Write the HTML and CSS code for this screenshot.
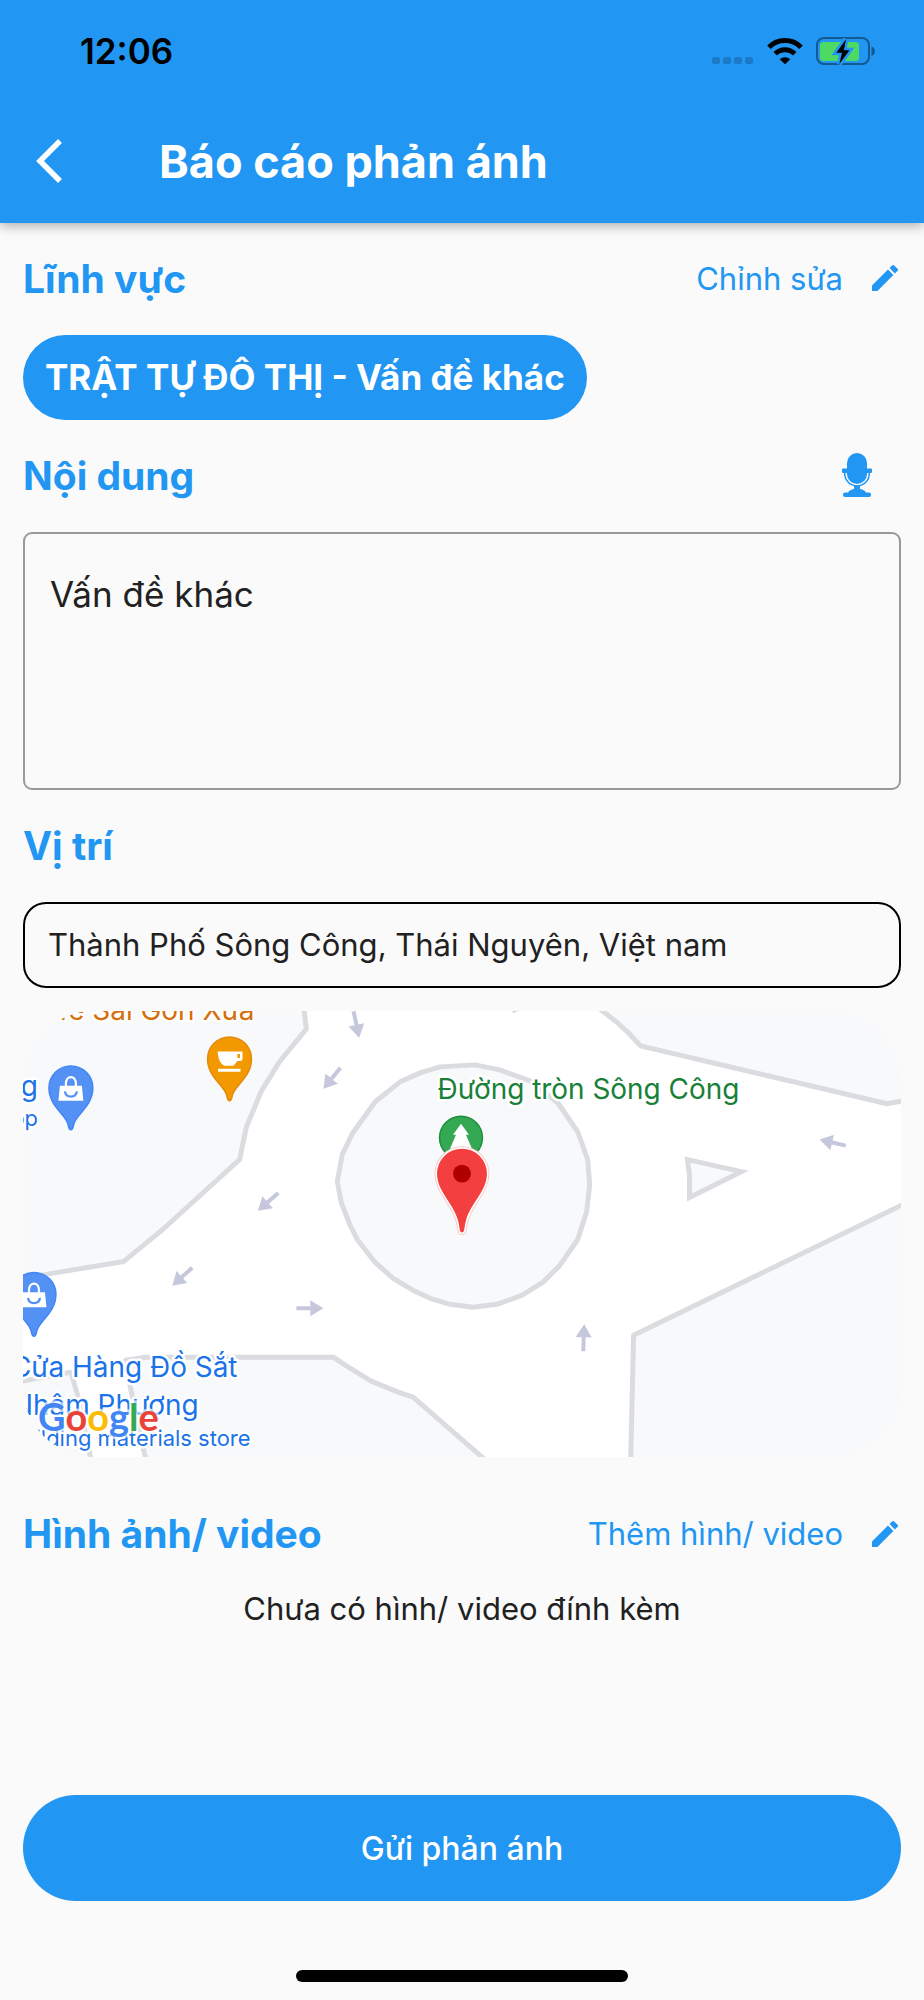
FILE: index.html
```html
<!DOCTYPE html>
<html lang="vi">
<head>
  <meta charset="UTF-8" />
  <meta name="viewport" content="width=device-width, initial-scale=1.0"/>
  <title>Báo cáo phản ánh</title>
  <link rel="stylesheet" href="styles.css">
</head>
<body>

<header class="header">
  <div class="status-bar">
    <span class="time">12:06</span>
    <div class="status-icons">
      <svg class="signal" width="42" height="26" viewBox="0 0 42 26">
        <g fill="#1c79c6">
          <rect x="0" y="19" width="8" height="7" rx="2.5"/>
          <rect x="11" y="19" width="8" height="7" rx="2.5"/>
          <rect x="22" y="19" width="8" height="7" rx="2.5"/>
          <rect x="33" y="19" width="8" height="7" rx="2.5"/>
        </g>
      </svg>
      <svg class="wifi" width="36" height="26" viewBox="0 0 36 26">
        <path d="M2 9.2A22.5 22.5 0 0 1 34 9.2" fill="none" stroke="#000" stroke-width="5"/>
        <path d="M8.3 15.8A13.8 13.8 0 0 1 27.7 15.8" fill="none" stroke="#000" stroke-width="5"/>
        <path d="M12.8 21.2A7.6 7.6 0 0 1 23.2 21.2L18 26.3z"/>
      </svg>
      <svg class="battery" width="60" height="28" viewBox="0 0 60 28">
        <rect x="1" y="1" width="52" height="26" rx="7" fill="none" stroke="#14598f" stroke-width="2"/>
        <path d="M55.5 9.5c4.500 1.500 4.500 8 0 9.500z" fill="#14598f"/>
        <rect x="4" y="5" width="39" height="19" rx="3.500" fill="#4cd964"/>
        <path d="M30 2.300L20.300 15.700H26L23.300 27L33.500 13.200H28z" stroke="#2196f3" stroke-width="5" paint-order="stroke"/>
      </svg>
    </div>
  </div>
  <div class="app-bar">
    <button type="button" class="back" aria-label="Quay lại">
      <svg width="27" height="44" viewBox="0 0 27 44"><path d="M24 2L4 22l20 20" fill="none" stroke="#fff" stroke-width="5.500"/></svg>
    </button>
    <h1>Báo cáo phản ánh</h1>
  </div>
</header>

<form class="report">
  <div class="section-head">
    <h2>Lĩnh vực</h2>
    <a href="#field" class="action">
      Chỉnh sửa
      <svg width="26" height="26" viewBox="3 3 18 18"><path d="M3 17.250V21h3.750L17.810 9.940l-3.750-3.750L3 17.250zM20.710 7.040a1 1 0 0 0 0-1.410l-2.340-2.340a1 1 0 0 0-1.410 0l-1.830 1.830 3.750 3.750 1.830-1.830z"/></svg>
    </a>
  </div>

  <div class="chip" id="field">TRẬT TỰ ĐÔ THỊ - Vấn đề khác</div>

  <div class="section-head">
    <h2><label for="content">Nội dung</label></h2>
    <button type="button" class="mic" aria-label="Ghi âm">
      <svg width="30" height="44" viewBox="0 0 30 44">
        <rect x="5" y="0" width="20" height="31" rx="10"/>
        <path d="M1 15.500h4v4.500h-4a1 1 0 0 1-1-1v-2.500a1 1 0 0 1 1-1zM25 15.500h4a1 1 0 0 1 1 1v2.500a1 1 0 0 1-1 1h-4z"/>
        <path d="M2.700 19v1.500a12.300 12.300 0 0 0 24.600 0V19" fill="none" stroke="#2196f3" stroke-width="1.500"/>
        <path d="M12 32.500h6v3.500c3 .5 5 1.500 6 3.500h3a2 2 0 0 1 2 2v.5a2 2 0 0 1-2 2H3a2 2 0 0 1-2-2v-.5a2 2 0 0 1 2-2h3c1-2 3-3 6-3.500z"/>
      </svg>
    </button>
  </div>

  <textarea id="content">Vấn đề khác</textarea>

  <div class="section-head">
    <h2><label for="address">Vị trí</label></h2>
  </div>

  <div class="location">
    <input type="text" id="address" value="Thành Phố Sông Công, Thái Nguyên, Việt nam" />

    <div class="map">
      <svg viewBox="22 1011 880 447">
        <defs>
          <path id="arrow" d="M-13-2H1V-8L14 0 1 8V2H-13z"/>
          <path id="pin" d="M0 42C-2 42-2 40-3 36C-6 26-22 18-22 0A22 22 0 0 1 22 0C22 18 6 26 3 36C2 40 2 42 0 42z"/>
          <path id="marker" d="M462 1233C459 1233 460 1228 458 1221C453 1203 437 1192 437 1174A25 25 0 0 1 487 1174C487 1192 471 1203 466 1221C464 1228 465 1233 462 1233z"/>
          <g id="shop">
            <use href="#pin" fill="#5491f5" stroke="#4285f4" stroke-width="1.500"/>
            <path d="M-11-2H11L12.500 13H-12.500z" fill="#fff"/>
            <path d="M-5-1V-4C-5-13 5-13 5-4V-1" fill="none" stroke="#fff" stroke-width="2.200"/>
            <path d="M-6 3.500C-5 10.500 5 10.500 6 3.500" fill="none" stroke="#5491f5" stroke-width="2.300"/>
          </g>
        </defs>

        <!-- land -->
        <g class="land">
          <path d="M303 1005L306 1029L279 1062L261 1091L246 1127L239 1160L162 1230L123 1262L45 1275L15 1280V1000z"/>
          <path d="M15 1383L70 1373L77 1397L91 1465H15z"/>
          <path d="M146 1465L130 1390L125 1361L145 1358H333L345 1366L371 1382L398 1393L413 1398L490 1465z"/>
          <path d="M595 1005L617 1022L630 1034L641 1046L888 1104L910 1100V1000z"/>
          <path d="M910 1202L634 1336L631 1465H910z"/>
          <path stroke-linejoin="miter" d="M688 1160L690 1175V1198L742 1172z"/>
          <path d="M337 1182L342 1155L352 1134L375 1102L400 1082L420 1073L440 1067L475 1065L500 1070L530 1081L558 1103L578 1132L588 1160L590 1185L587 1212L578 1240L560 1266L543 1283L522 1296L497 1305L473 1308L450 1305L430 1299L415 1292L393 1279L375 1263L357 1240L350 1226L341 1203z"/>
        </g>

        <g fill="#c5c8dc">
          <use href="#arrow" transform="translate(309 1309)"/>
          <use href="#arrow" transform="translate(356 1024) rotate(78)"/>
          <use href="#arrow" transform="translate(332 1078) rotate(129)"/>
          <use href="#arrow" transform="translate(268 1202) rotate(139)"/>
          <use href="#arrow" transform="translate(182 1277) rotate(138)"/>
          <use href="#arrow" transform="translate(834 1143) rotate(193)"/>
          <use href="#arrow" transform="translate(584 1339) rotate(-88)"/>
          <path d="M513 1011h5l-5 2z"/>
        </g>

        <!-- places -->
        <g transform="translate(229 1059)">
          <use href="#pin" fill="#f29900" stroke="#e58a0a" stroke-width="1.500"/>
          <path fill="#fff" d="M-12-7.500H13V.5C13 2 11 2 8 2L4 7H-5C-10 4-11 0-12-7.500zM8-5V-1H10.500V-5zM-11.500 10H11V13H-11.500z"/>
        </g>
        <use href="#shop" transform="translate(70 1088)"/>
        <use href="#shop" transform="translate(33 1295)"/>

        <g class="place blue">
          <text x="37" y="1096">Hùng</text>
          <text x="37" y="1126" class="small">Shop</text>
          <text x="237" y="1378">Cửa Hàng Đồ Sắt</text>
          <text x="198" y="1416">Nhâm Phượng</text>
          <text x="250" y="1447" class="small">Building materials store</text>
        </g>
        <text x="254" y="1020" class="place orange">Cafe Sài Gòn Xưa</text>
        <text x="740" y="1099" class="place green">Đường tròn Sông Công</text>

        <g transform="translate(461 1138)">
          <circle r="21.500" fill="#34a853" stroke="#1e8e3e" stroke-width="1.500"/>
          <path fill="#fff" d="M0-14L8-3H5L11 11H-11L-5-3H-8z"/>
        </g>
        <use href="#marker" fill="#f7c9c9" stroke="#f7c9c9" stroke-width="5"/>
        <use href="#marker" fill="#f33f3f" stroke="#fff" stroke-width="3" paint-order="stroke"/>
        <circle cx="462" cy="1174" r="9" fill="#b00000"/>

        <text x="37" y="1432" class="google"><tspan fill="#4285f4">G</tspan><tspan fill="#ea4335">o</tspan><tspan fill="#fbbc04">o</tspan><tspan fill="#4285f4">g</tspan><tspan fill="#34a853">l</tspan><tspan fill="#ea4335">e</tspan></text>
      </svg>
    </div>
  </div>

  <div class="media">
    <div class="section-head">
      <h2>Hình ảnh/ video</h2>
      <a href="#media" class="action">
        Thêm hình/ video
        <svg width="26" height="26" viewBox="3 3 18 18"><path d="M3 17.250V21h3.750L17.810 9.940l-3.750-3.750L3 17.250zM20.710 7.040a1 1 0 0 0 0-1.410l-2.340-2.340a1 1 0 0 0-1.410 0l-1.830 1.830 3.750 3.750 1.830-1.830z"/></svg>
      </a>
    </div>
    <p id="media">Chưa có hình/ video đính kèm</p>
  </div>

  <button type="submit" class="submit">Gửi phản ánh</button>
</form>

<div class="home-indicator"></div>

</body>
</html>
```
FILE: styles.css
```css
* {
  box-sizing: border-box;
}

body {
  font-family: Inter, "Noto Sans", sans-serif;
  font-size: 31px;
  color: #212121;
  background-color: #fafafa;
  margin: 0;
  min-height: 100vh;
  display: flex;
  flex-direction: column;
}

h1, h2, p {
  margin: 0;
}

svg {
  display: block;
}

button {
  font-family: inherit;
  border: none;
  padding: 0;
  background: none;
  cursor: pointer;
}

.header {
  background-color: #2196f3;
  box-shadow: 0 2px 12px rgba(0,0,0,0.35);
}

.status-bar {
  display: flex;
  justify-content: space-between;
  align-items: center;
  height: 101px;
  padding: 0 48px 0 80px;
}

.time {
  font-size: 35px;
  font-weight: 600;
  color: #000;
}

.status-icons {
  display: flex;
  align-items: center;
  gap: 13px;
}

.app-bar {
  display: flex;
  align-items: center;
  gap: 96px;
  height: 122px;
  padding: 0 36px 2px;
}

h1 {
  font-size: 45px;
  font-weight: 700;
  color: #fff;
}

.report {
  flex: 1;
  display: flex;
  flex-direction: column;
  gap: 28px;
  padding: 28px 23px 0;
}

.section-head {
  display: flex;
  justify-content: space-between;
  align-items: center;
  height: 56px;
  padding-bottom: 2px;
}

h2 {
  font-size: 39px;
  font-weight: 700;
  color: #2196f3;
}

.action {
  display: flex;
  align-items: center;
  gap: 29px;
  padding-right: 3px;
  color: #2196f3;
  text-decoration: none;
}

.action svg, .mic svg {
  fill: #2196f3;
}

.mic {
  padding-right: 29px;
}

.chip {
  align-self: flex-start;
  line-height: 85px;
  padding: 0 22px;
  border-radius: 43px;
  font-size: 35px;
  font-weight: 700;
  color: #fff;
  background-color: #2196f3;
}

textarea, input {
  display: block;
  width: 100%;
  font-family: inherit;
  color: #212121;
  background: none;
}

textarea {
  height: 258px;
  padding: 37px 25px;
  border: 2px solid #999;
  border-radius: 9px;
  font-size: 35px;
  line-height: 46px;
  resize: none;
}

.location {
  display: flex;
  flex-direction: column;
  gap: 23px;
}

input {
  height: 86px;
  padding: 0 23px 2px;
  border: 2px solid #000;
  border-radius: 23px;
  font-size: 31px;
}

.map {
  border-radius: 71px;
  overflow: hidden;
  background-color: #fff;
}

.land {
  fill: #f8f9fb;
  stroke: #dadce0;
  stroke-width: 5px;
  stroke-linejoin: round;
}

.place {
  font-size: 28px;
  text-anchor: end;
  stroke: #fff;
  stroke-width: 5px;
  stroke-linejoin: round;
  paint-order: stroke;
}

.place .small {
  font-size: 22px;
}

.blue {
  fill: #1a73e8;
}

.orange {
  fill: #d56e0c;
}

.green {
  fill: #188038;
}

.google {
  font-family: Lato, sans-serif;
  font-size: 38px;
  font-weight: 700;
  stroke: rgba(255,255,255,0.7);
  stroke-width: 5px;
  paint-order: stroke;
}

.media {
  margin-top: 22px;
}

.media p {
  margin-top: 23px;
  line-height: 46px;
  text-align: center;
}

.submit {
  height: 106px;
  margin-top: auto;
  border-radius: 53px;
  font-size: 32px;
  font-weight: 500;
  color: #fff;
  background-color: #2196f3;
}

.home-indicator {
  width: 36%;
  height: 12px;
  margin: 69px auto 18px;
  border-radius: 6px;
  background-color: #000;
}

@media screen and (max-width: 700px) {
  .app-bar {
    gap: 30px;
  }

  h1 {
    font-size: 32px;
  }

  h2, textarea, input {
    font-size: 26px;
  }

  .action, .chip, .media p {
    font-size: 22px;
  }
}
```
